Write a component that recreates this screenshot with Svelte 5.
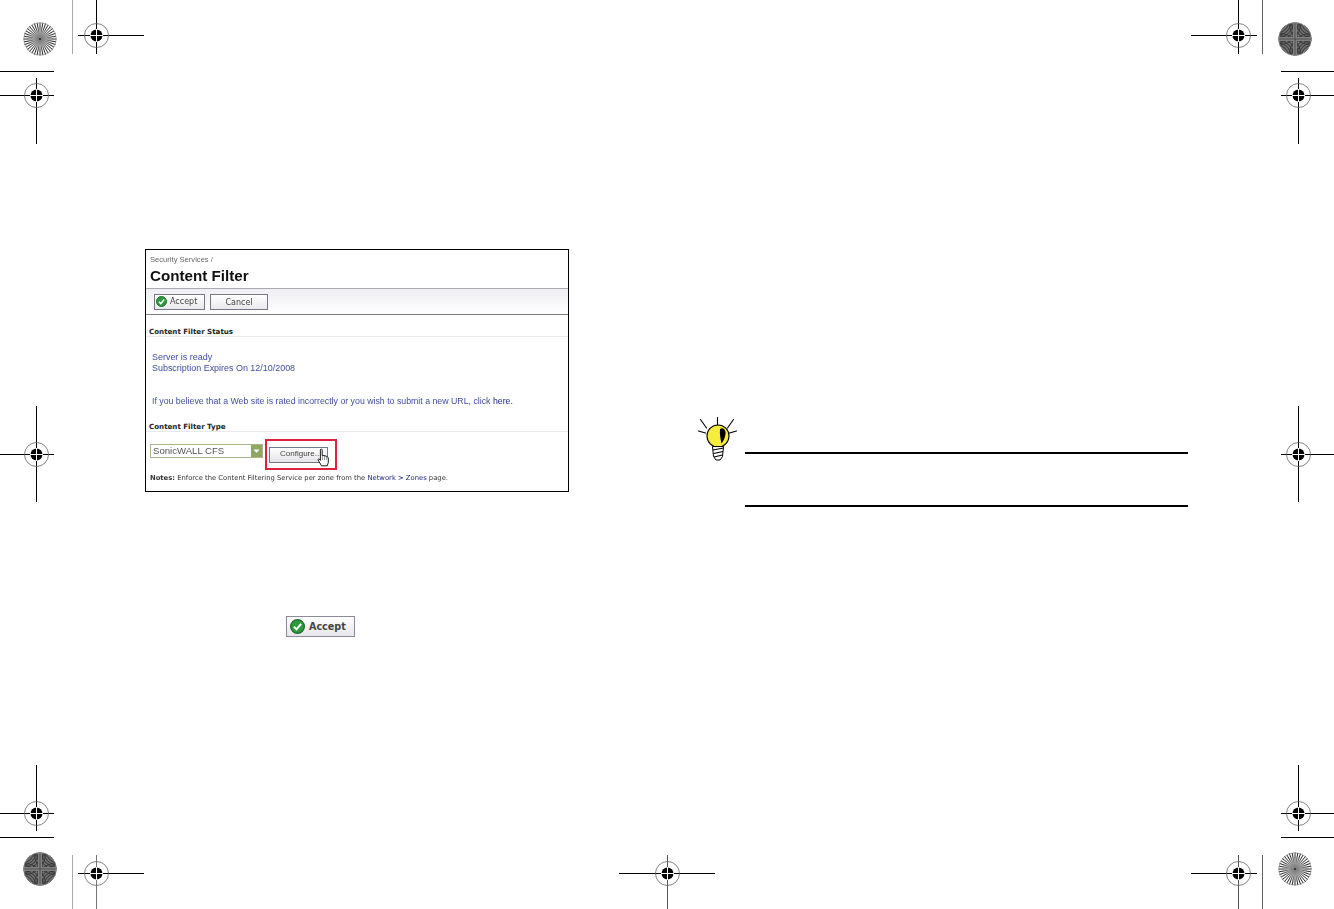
<script>
  const crosses = [
    { x: 96, y: 35, l: 18, r: 47, t: 35, b: 18, vc: '#000', hc: '#000' },
    { x: 36, y: 95, l: 36, r: 17, t: 17, b: 48, vc: '#000', hc: '#000' },
    { x: 1238, y: 35, l: 47, r: 18, t: 35, b: 18, vc: '#000', hc: '#000' },
    { x: 1298, y: 95, l: 17, r: 36, t: 17, b: 48, vc: '#000', hc: '#000' },
    { x: 36, y: 454, l: 36, r: 17, t: 48, b: 47, vc: '#000', hc: '#000' },
    { x: 1298, y: 454, l: 17, r: 36, t: 48, b: 47, vc: '#000', hc: '#000' },
    { x: 36, y: 813, l: 36, r: 17, t: 48, b: 17, vc: '#000', hc: '#000' },
    { x: 1298, y: 813, l: 17, r: 36, t: 48, b: 17, vc: '#000', hc: '#000' },
    { x: 96, y: 873, l: 18, r: 47, t: 18, b: 36, vc: '#777', hc: '#000' },
    { x: 667, y: 873, l: 48, r: 47, t: 18, b: 36, vc: '#555', hc: '#000' },
    { x: 1238, y: 873, l: 47, r: 18, t: 18, b: 36, vc: '#555', hc: '#000' }
  ];
  const rules = [
    { x: 72, y: 0, w: 1, h: 54, c: '#aaa' },
    { x: 0, y: 71, w: 54, h: 1, c: '#000' },
    { x: 1262, y: 0, w: 1, h: 54, c: '#666' },
    { x: 1281, y: 71, w: 53, h: 1, c: '#000' },
    { x: 0, y: 837, w: 54, h: 1, c: '#000' },
    { x: 1281, y: 837, w: 53, h: 1, c: '#000' },
    { x: 72, y: 855, w: 1, h: 54, c: '#aaa' },
    { x: 1262, y: 855, w: 1, h: 54, c: '#666' }
  ];
  const bursts = [
    { x: 40, y: 39, dark: false },
    { x: 1295, y: 39, dark: true },
    { x: 40, y: 869, dark: true },
    { x: 1295, y: 869, dark: false }
  ];
  const spokes = Array.from({ length: 36 }, (_, i) => {
    const a = (i * Math.PI) / 18;
    return { x: 17 + 17 * Math.cos(a), y: 17 + 17 * Math.sin(a) };
  });
  const arcs = [3, 5.5, 8, 10.5, 13, 15.5, 18, 20.5, 23];
  const corners = [[0, 0], [34, 0], [0, 34], [34, 34]];
</script>

<div class="page">
  {#each rules as r}
    <div class="rule" style="left:{r.x}px;top:{r.y}px;width:{r.w}px;height:{r.h}px;background:{r.c}"></div>
  {/each}

  {#each crosses as c}
    <svg class="mark" style="left:{c.x - c.l}px;top:{c.y - c.t}px" width={c.l + c.r + 1} height={c.t + c.b + 1}>
      <line x1={c.l + 0.5} y1="0" x2={c.l + 0.5} y2={c.t + c.b + 1} stroke={c.vc} />
      <line x1="0" y1={c.t + 0.5} x2={c.l + c.r + 1} y2={c.t + 0.5} stroke={c.hc} />
      <circle cx={c.l + 0.5} cy={c.t + 0.5} r="12" fill="#fff" fill-opacity="0" stroke="#666" stroke-width="0.8" />
      <circle cx={c.l + 0.5} cy={c.t + 0.5} r="6" fill="#000" />
      <line x1={c.l + 0.5} y1={c.t - 6} x2={c.l + 0.5} y2={c.t + 7} stroke="#fff" />
      <line x1={c.l - 6} y1={c.t + 0.5} x2={c.l + 7} y2={c.t + 0.5} stroke="#fff" />
    </svg>
  {/each}

  {#each bursts as b, i}
    <svg class="mark" style="left:{b.x - 17}px;top:{b.y - 17}px" width="34" height="34" viewBox="0 0 34 34">
      <defs>
        <clipPath id="clip{i}"><circle cx="17" cy="17" r="16.5" /></clipPath>
        <radialGradient id="glow{i}">
          <stop offset="0" stop-color="#777" />
          <stop offset="0.55" stop-color="#a0a0a0" stop-opacity="0.9" />
          <stop offset="1" stop-color="#ccc" stop-opacity="0" />
        </radialGradient>
      </defs>
      {#if b.dark}
        <g clip-path="url(#clip{i})">
          <rect width="34" height="34" fill="#6e6e6e" />
          {#each corners as k}
            {#each arcs as r}
              <circle cx={k[0]} cy={k[1]} {r} fill="none" stroke="#333" stroke-width="0.9" />
            {/each}
          {/each}
          <rect x="15" width="4" height="34" fill="#808080" />
          <rect y="15" width="34" height="4" fill="#808080" />
          <line x1="17" y1="0" x2="17" y2="34" stroke="#444" stroke-width="0.8" />
          <line x1="0" y1="17" x2="34" y2="17" stroke="#444" stroke-width="0.8" />
        </g>
        <circle cx="17" cy="17" r="16.3" fill="none" stroke="#999" stroke-width="0.6" />
      {:else}
        <g clip-path="url(#clip{i})">
          <circle cx="17" cy="17" r="16.5" fill="#fff" />
          {#each spokes as s}
            <line x1="17" y1="17" x2={s.x} y2={s.y} stroke="#222" stroke-width="1" />
          {/each}
          <circle cx="17" cy="17" r="12" fill="url(#glow{i})" />
          <circle cx="17" cy="17" r="1" fill="#222" />
        </g>
        <circle cx="17" cy="17" r="16.2" fill="none" stroke="#888" stroke-width="0.7" />
      {/if}
    </svg>
  {/each}

  <main class="spread">
    <section class="left">
      <figure class="shot">
        <div class="crumb">Security Services /</div>
        <h1>Content Filter</h1>
        <div class="toolbar">
          <span class="btn accept">
            <svg width="11" height="11" viewBox="0 0 12 12"><circle cx="6" cy="6" r="5.5" fill="#2f9a3c" stroke="#1c6b2a" /><path d="M3.2 6.2 5.2 8.3 8.9 3.9" fill="none" stroke="#fff" stroke-width="1.6" /></svg>
            <span class="label">Accept</span>
          </span>
          <span class="btn cancel"><span class="label">Cancel</span></span>
        </div>
        <h2 class="first">Content Filter Status</h2>
        <p class="status">Server is ready</p>
        <p class="status">Subscription Expires On 12/10/2008</p>
        <p class="info">If you believe that a Web site is rated incorrectly or you wish to submit a new URL, click <b>here.</b></p>
        <h2 class="second">Content Filter Type</h2>
        <div class="controls">
          <span class="select"><span class="value">SonicWALL CFS</span><i class="arrow"><svg width="7" height="5" viewBox="0 0 7 5"><path d="M0.5 0.5 3.5 4 6.5 0.5Z" fill="#fff" /></svg></i></span>
          <span class="highlight">
            <span class="configure"><span class="label">Configure...</span></span>
            <svg class="hand" width="12" height="19" viewBox="0 0 12 19"><path d="M3.5 1.5C4.5 .7 5.2 1.2 5.2 2.2V7.5L7 7.6 8.8 8 10.5 8.8C11.2 9.2 11.3 10 11.3 11V14.5L10.2 17.8H4.5L1.2 12.2C.7 11.2 1.6 10.5 2.4 11.2L3.4 12.4V2.2Z" fill="#fff" stroke="#000" stroke-width="0.9" /><path d="M5.5 8V12M7.5 8V12M9.4 8.6V12" stroke="#555" stroke-width="0.6" /></svg>
          </span>
        </div>
        <p class="note"><b>Notes:</b> Enforce the Content Filtering Service per zone from the <span class="link">Network &gt; Zones</span> page.</p>
      </figure>
      <div class="inline-accept">
        <span class="big-accept">
          <svg width="15" height="15" viewBox="0 0 12 12"><circle cx="6" cy="6" r="5.5" fill="#2f9a3c" stroke="#1c6b2a" /><path d="M3.2 6.2 5.2 8.3 8.9 3.9" fill="none" stroke="#fff" stroke-width="1.6" /></svg>
          Accept
        </span>
      </div>
    </section>

    <section class="right">
      <svg class="bulb" width="40" height="44" viewBox="0 0 40 44">
        <g stroke="#000" stroke-width="1.1" stroke-linecap="round">
          <line x1="19.5" y1="-0.5" x2="19.5" y2="7" />
          <line x1="2.5" y1="1.5" x2="8.5" y2="10" />
          <line x1="35.5" y1="1.5" x2="29.5" y2="10" />
          <line x1="0.5" y1="13" x2="7.5" y2="15" />
          <line x1="38.5" y1="13" x2="31.5" y2="15" />
        </g>
        <circle cx="20" cy="18" r="11" fill="#f6ec3c" stroke="#000" stroke-width="1.1" />
        <path d="M22 11C25 9 28 12 27.5 16 27 20 25.5 23 23.5 25.5 22.5 21 21.5 16 22 11Z" fill="#000" />
        <path d="M14.5 28.5H25.5L24.5 38.5 22 42H18L15.5 38.5Z" fill="#fff" stroke="#000" />
        <path d="M15 32 25.5 30M15.5 35.5 25 33.5M16 39 24.5 37" stroke="#000" stroke-width="1.2" />
      </svg>
      <div class="tip"></div>
    </section>
  </main>
</div>

<style>
  :global(body) {
    margin: 0;
    background: #fff;
  }
  .page {
    position: relative;
    width: 1334px;
    height: 909px;
    overflow: hidden;
    background: #fff;
    font-family: "Liberation Sans", Arial, sans-serif;
  }
  .rule,
  .mark {
    position: absolute;
    display: block;
  }
  .spread {
    display: flex;
    height: 100%;
  }
  .left {
    width: 424px;
    margin-left: 145px;
    padding-top: 249px;
  }
  .shot {
    box-sizing: border-box;
    width: 424px;
    height: 243px;
    margin: 0;
    border: 1px solid #000;
    padding-top: 5px;
    color: #000;
  }
  .crumb,
  h1,
  .label,
  .status,
  .info,
  .value,
  .note {
    filter: blur(0.3px);
  }
  .crumb {
    margin-left: 4px;
    height: 10px;
    font-size: 7.6px;
    line-height: 10px;
    color: #666;
  }
  h1 {
    margin: 1px 0 0 4px;
    height: 20px;
    font-size: 15.2px;
    line-height: 20px;
    font-weight: 700;
    color: #111;
  }
  .toolbar {
    box-sizing: border-box;
    display: flex;
    gap: 5px;
    height: 27px;
    margin-top: 2px;
    padding: 5px 0 0 8px;
    border-top: 1px solid #aaa8b0;
    border-bottom: 1px solid #7d7c88;
    background: linear-gradient(#efeef3, #fff);
  }
  .btn {
    box-sizing: border-box;
    display: flex;
    align-items: center;
    height: 16px;
    border: 1px solid #77778a;
    background: linear-gradient(#fff, #e9e9ee);
    font-family: "DejaVu Sans", sans-serif;
    font-size: 8px;
    color: #444;
  }
  .accept {
    gap: 3px;
    width: 51px;
    padding: 0 0 1px 1px;
  }
  .cancel {
    justify-content: center;
    width: 58px;
  }
  h2 {
    margin: 0 0 0 3px;
    height: 12px;
    font-family: "DejaVu Sans", sans-serif;
    font-size: 7.1px;
    line-height: 12px;
    font-weight: 700;
    color: #222;
    position: relative;
  }
  h2::after {
    content: "";
    position: absolute;
    left: -3px;
    width: 422px;
    top: 10px;
    height: 1px;
    background: #eaeaea;
  }
  .first {
    margin-top: 11px;
  }
  .second {
    margin-top: 14px;
  }
  p {
    margin: 0;
  }
  .status,
  .info {
    margin-left: 6px;
    height: 11px;
    line-height: 11px;
    color: #3f4ca2;
    white-space: nowrap;
  }
  .status {
    font-size: 8.95px;
  }
  .info {
    font-size: 8.78px;
  }
  .first + .status {
    margin-top: 14px;
  }
  .info {
    margin-top: 22px;
  }
  .info b {
    font-weight: 400;
    color: #1c2680;
  }
  .controls {
    display: flex;
    align-items: flex-start;
    height: 31px;
    margin: 6px 0 0 4px;
  }
  .select {
    box-sizing: border-box;
    position: relative;
    width: 113px;
    height: 14px;
    margin-top: 5px;
    padding-left: 2px;
    border: 1px solid #a9b58c;
    font-size: 9.6px;
    line-height: 12px;
    color: #555;
  }
  .arrow {
    position: absolute;
    right: 0;
    top: 0;
    display: flex;
    align-items: center;
    justify-content: center;
    width: 11px;
    height: 12px;
    background: #8fa75f;
  }
  .highlight {
    box-sizing: border-box;
    position: relative;
    display: flex;
    align-items: center;
    width: 72px;
    height: 31px;
    margin-left: 2px;
    padding-left: 2px;
    border: 2px solid #e0203c;
  }
  .configure {
    box-sizing: border-box;
    width: 59px;
    height: 16px;
    border: 1px solid #77778a;
    background: linear-gradient(#fff, #e4e4e8);
    font-size: 8px;
    line-height: 12px;
    padding-left: 10px;
    color: #444;
  }
  .label {
    display: inline-block;
  }
  .hand {
    position: absolute;
    left: 50px;
    top: 7px;
  }
  .note {
    margin: 3px 0 0 4px;
    height: 11px;
    font-family: "DejaVu Sans", sans-serif;
    font-size: 6.8px;
    line-height: 11px;
    color: #333;
    white-space: nowrap;
  }
  .link {
    color: #1c2680;
  }
  .inline-accept {
    margin: 124px 0 0 141px;
  }
  .big-accept {
    box-sizing: border-box;
    display: flex;
    align-items: center;
    gap: 4px;
    width: 69px;
    height: 21px;
    padding: 0 0 1px 3px;
    border: 1px solid #8a8a9a;
    background: linear-gradient(#fff, #e6e6ec);
    font-family: "DejaVu Sans", sans-serif;
    font-size: 9.6px;
    font-weight: 700;
    color: #444;
  }
  .right {
    display: flex;
    width: 490px;
    margin-left: 129px;
    padding-top: 418px;
  }
  .bulb {
    flex: none;
    width: 40px;
    height: 44px;
    overflow: visible;
  }
  .tip {
    box-sizing: border-box;
    width: 443px;
    height: 55px;
    margin: 34px 0 0 7px;
    border-top: 2px solid #000;
    border-bottom: 2px solid #000;
  }
</style>
